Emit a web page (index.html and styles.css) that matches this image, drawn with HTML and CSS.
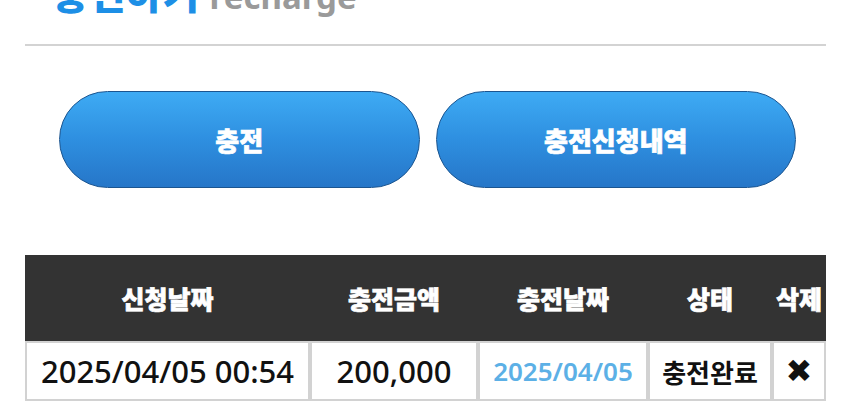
FILE: index.html
```html
<!DOCTYPE html>
<html lang="ko">
<head>
<meta charset="utf-8">
<title>충전하기</title>
<link rel="stylesheet" href="styles.css">
</head>
<body>
<div class="page">
  <h1 class="title"><span class="title-ko">충전하기</span> <span class="title-en">recharge</span></h1>
  <hr class="divider">
  <div class="actions">
    <button class="pill" type="button">충전</button>
    <button class="pill" type="button">충전신청내역</button>
  </div>
  <table class="history">
    <colgroup>
      <col class="c-req"><col class="c-amt"><col class="c-date"><col class="c-state"><col class="c-del">
    </colgroup>
    <thead>
      <tr>
        <th>신청날짜</th>
        <th>충전금액</th>
        <th>충전날짜</th>
        <th>상태</th>
        <th>삭제</th>
      </tr>
    </thead>
    <tbody>
      <tr>
        <td class="num">2025/04/05 00:54</td>
        <td class="num">200,000</td>
        <td class="date">2025/04/05</td>
        <td class="state">충전완료</td>
        <td class="del">✖</td>
      </tr>
    </tbody>
  </table>
</div>
</body>
</html>
```

FILE: styles.css
```css
html, body {
  margin: 0;
  padding: 0;
  background: #ffffff;
  overflow: hidden;
}

.page {
  padding: 0 24px 0 25px;
  font-family: "Noto Sans", "Noto Sans CJK KR", sans-serif;
}

.title {
  margin: -28px 0 0 27px;
  height: 40px;
  line-height: 40px;
  font-size: 40px;
  font-weight: 800;
  white-space: nowrap;
}

.title-ko {
  color: #1d8fe6;
  font-family: "Noto Sans CJK KR Black", "Noto Sans CJK KR", sans-serif;
  font-weight: 900;
}

.title-en {
  color: #9a9a9a;
  font-size: 33px;
  font-weight: 700;
}

.divider {
  margin: 32px 0 0;
  border: 0;
  height: 2px;
  background: #d3d3d3;
}

.actions {
  display: flex;
  gap: 16px;
  padding: 0 30px 0 34px;
  margin-top: 45px;
}

.pill {
  flex: 1;
  height: 97px;
  border: 1.5px solid #1b5590;
  border-radius: 49px;
  background: linear-gradient(#3eabf4 0%, #2e8fe0 50%, #2676c8 100%);
  color: #ffffff;
  font-family: "Noto Sans CJK KR Black", "Noto Sans CJK KR", sans-serif;
  font-size: 26px;
  font-weight: 900;
  -webkit-text-stroke: 0.7px #ffffff;
  padding: 0;
  cursor: pointer;
}

.history {
  margin-top: 67px;
  width: 801px;
  table-layout: fixed;
  border-collapse: separate;
  border-spacing: 0;
}

.c-req { width: 285px; }
.c-amt { width: 168px; }
.c-date { width: 170px; }
.c-state { width: 124px; }
.c-del { width: 54px; }

.history th {
  background: #333333;
  color: #ffffff;
  height: 86px;
  padding: 0;
  font-family: "Noto Sans CJK KR Black", "Noto Sans CJK KR", sans-serif;
  font-size: 25px;
  font-weight: 900;
  -webkit-text-stroke: 0.7px #ffffff;
  white-space: nowrap;
  text-align: center;
}

.history td {
  height: 56px;
  padding: 0;
  border: 2px solid #d2d2d2;
  text-align: center;
  white-space: nowrap;
  color: #111111;
}

.history td.num {
  font-size: 31px;
  font-weight: 500;
}

.history td.date {
  color: #5cb0e6;
  font-size: 26px;
  font-weight: 600;
}

.history td.state {
  font-family: "Noto Sans CJK KR", sans-serif;
  font-size: 26px;
  font-weight: 700;
}

.history td.del {
  font-family: "DejaVu Sans", sans-serif;
  font-size: 32px;
  font-weight: 700;
}
```
